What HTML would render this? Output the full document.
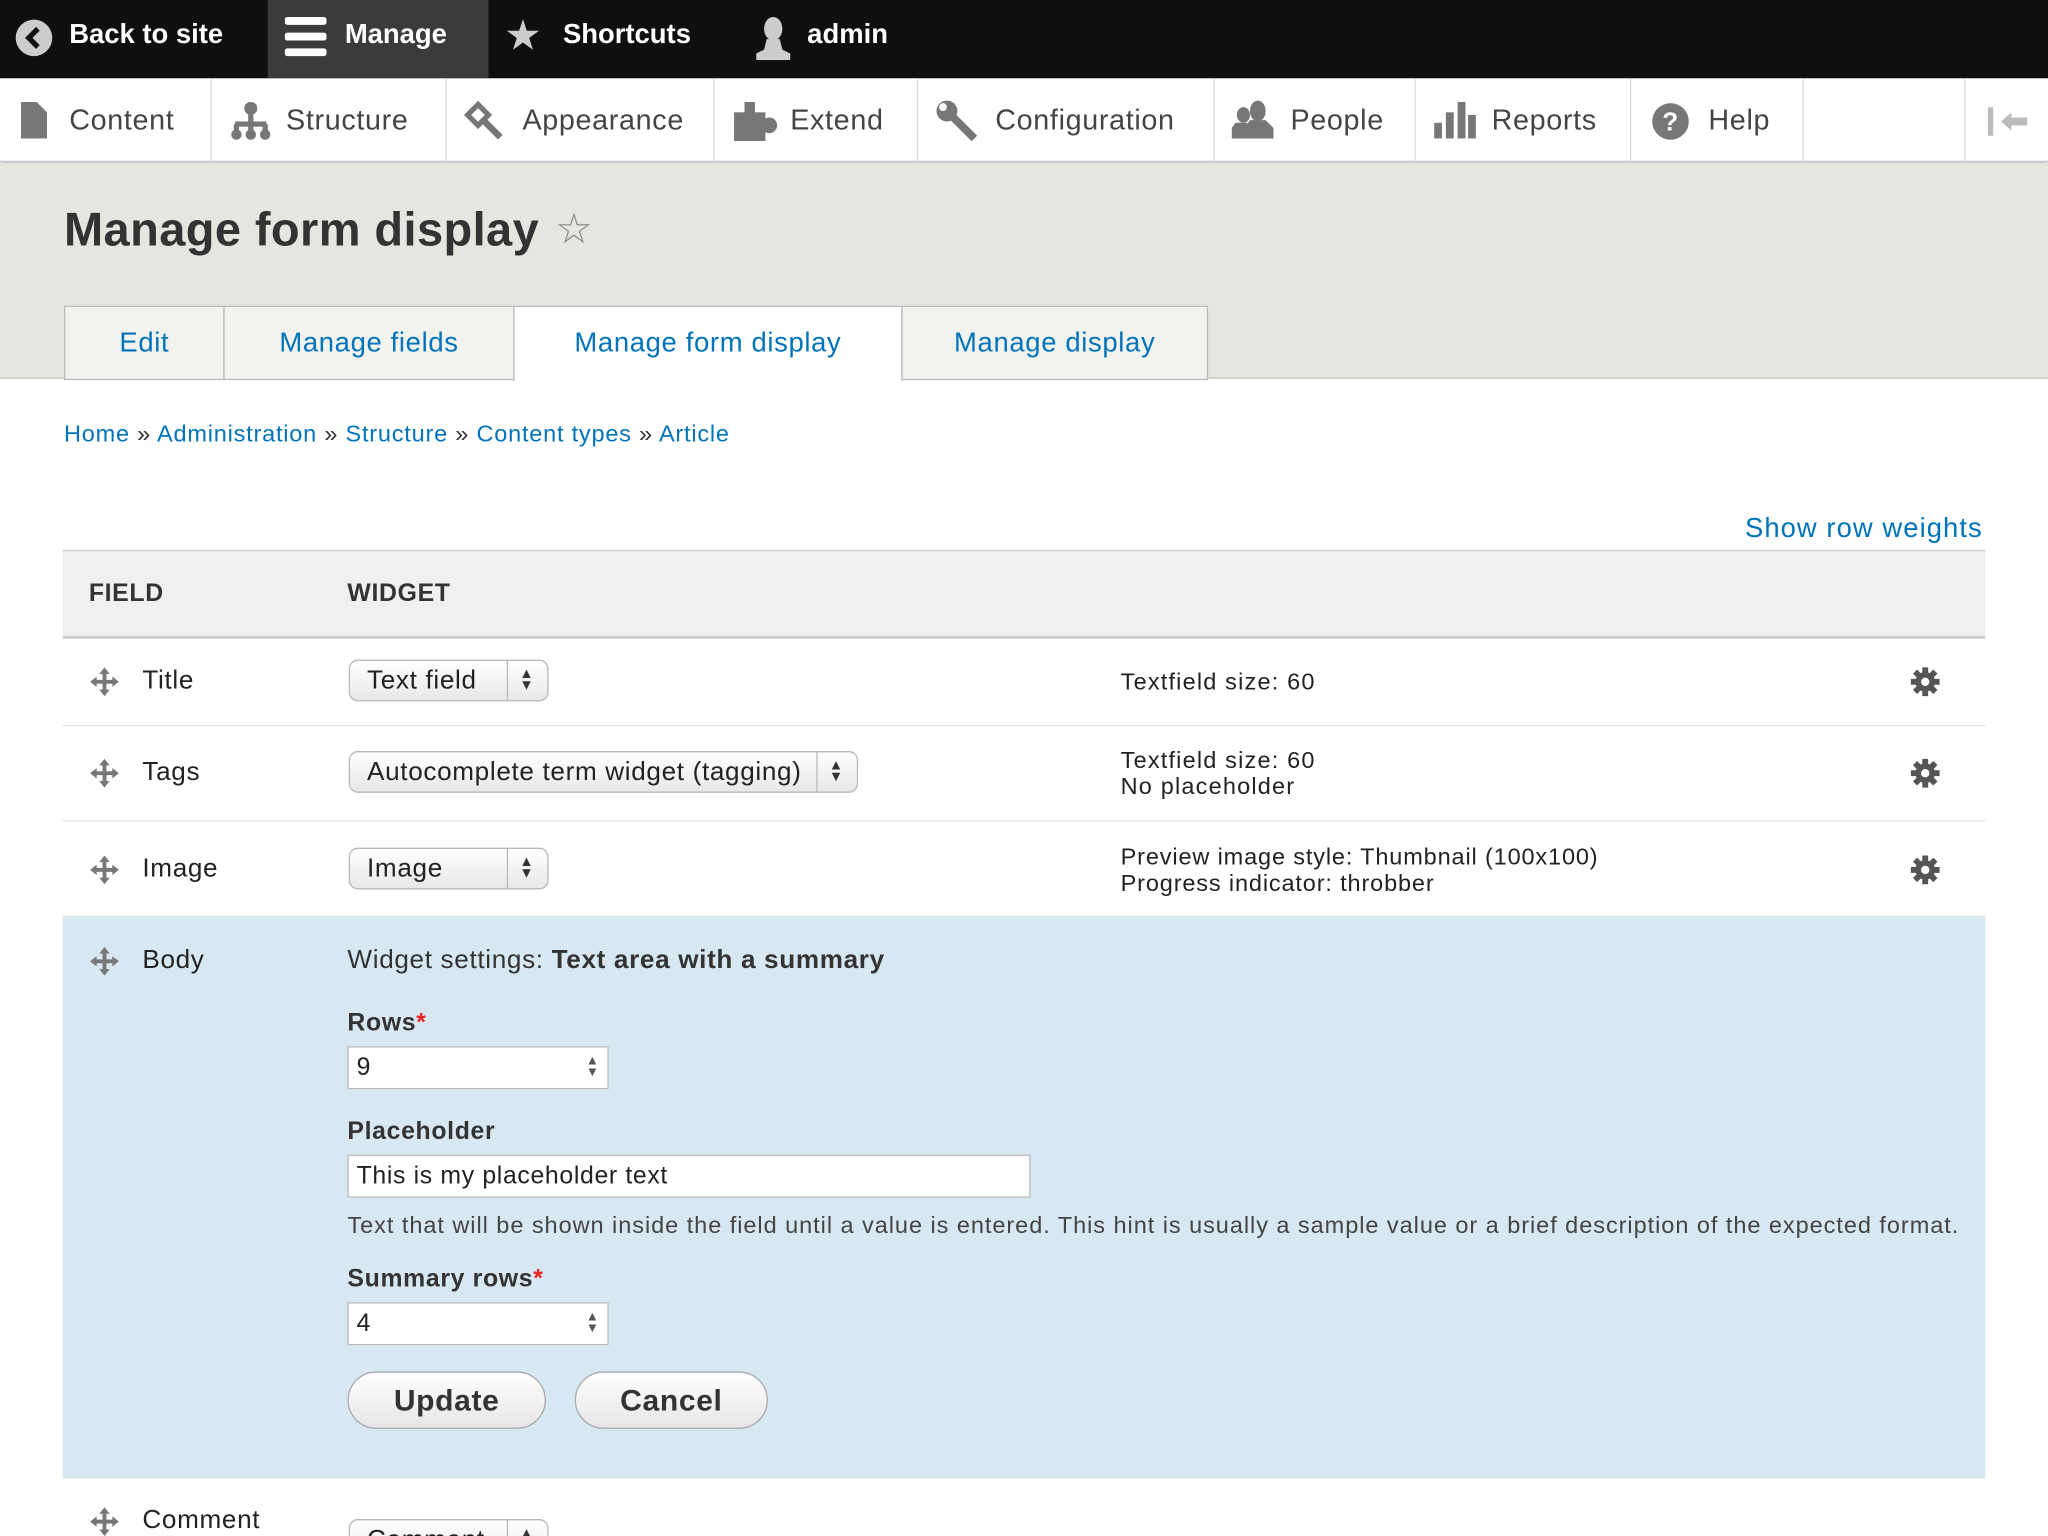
<!DOCTYPE html>
<html><head><meta charset="utf-8"><style>
*{box-sizing:border-box;margin:0;padding:0}
html,body{width:2048px;height:1536px;overflow:hidden;background:#fff}
#w{position:absolute;left:0;top:0;width:1568px;height:1176px;transform:scale(1.306122);transform-origin:0 0;font-family:"Liberation Sans",sans-serif;color:#222;overflow:hidden;letter-spacing:.5px}
.a{position:absolute;white-space:nowrap}
.top{left:0;top:0;width:1568px;height:60px;background:#0f0f0f}
.tt{color:#fff;font-weight:bold;font-size:21px;top:15px;letter-spacing:0}
.nav{left:0;top:60px;width:1568px;height:64px;background:#fff;border-bottom:1px solid #ccc;box-shadow:0 2px 3px rgba(0,0,0,.25)}
.ni{top:79px;font-size:22px;color:#444}
.sep{top:60px;width:1px;height:64px;background:#ddd}
.hdr{left:0;top:125px;width:1568px;height:165px;background:#e6e6e0;border-bottom:1px solid #c8c8c2}
.tab{top:234px;height:57px;border:1px solid #bbb;background:#f2f2ee;color:#0073ba;font-size:21px;text-align:center;line-height:56px}
.lnk{color:#0073ba}
.row{left:48px;width:1472px;border-bottom:1px solid #e2e2e2}
.sel{height:32px;border:1px solid #b8b8b8;border-radius:7px;background:linear-gradient(#fff,#e8e8e8);font-size:20px;line-height:30px;padding-left:13px;color:#222}
.sel:after{content:"";position:absolute;right:30px;top:0;width:1px;height:30px;background:#bbb}
.arr{position:absolute;right:10px;top:0;font-size:11px;line-height:9px;padding-top:6px;color:#333}
.mv{position:absolute}
.gear{position:absolute}
.inp{height:33px;border:1px solid #bbb;background:#fff;font-size:19px;line-height:31px;padding-left:6px}
.btn{height:44px;border:1px solid #aaa;border-radius:22px;background:linear-gradient(#fff,#e6e6e6);font-size:23px;font-weight:bold;text-align:center;line-height:42px;color:#333}
.lbl{font-size:19px;font-weight:bold;color:#333}
.req{color:#e22}
</style></head><body><div id="w">
<svg width="0" height="0" style="position:absolute"><defs>
<g id="mv"><path d="M12 1 L16 6 H13.5 V10.5 H18 V8 L23 12 L18 16 V13.5 H13.5 V18 H16 L12 23 L8 18 H10.5 V13.5 H6 V16 L1 12 L6 8 V10.5 H10.5 V6 H8Z" fill="#777"/></g>
<g id="gear"><circle cx="12" cy="12" r="7.5" fill="#555"/><g stroke="#555" stroke-width="4.5"><path d="M12 1V23M1 12H23M4.2 4.2L19.8 19.8M19.8 4.2L4.2 19.8"/></g><circle cx="12" cy="12" r="3.2" fill="#fff"/></g>
</defs></svg>
<div class="a top"></div>
<div class="a" style="left:205px;top:0;width:169px;height:60px;background:#3b3b3b"></div>
<svg class="a" style="left:11px;top:14px" width="30" height="30"><circle cx="15" cy="15" r="14" fill="#ccc"/><path d="M18 8 L11 15 L18 22" stroke="#111" stroke-width="4" fill="none"/></svg>
<div class="a tt" style="left:53px">Back to site</div>
<svg class="a" style="left:218px;top:12px" width="32" height="34"><rect x="0" y="1" width="32" height="6" rx="2" fill="#fff"/><rect x="0" y="13" width="32" height="6" rx="2" fill="#fff"/><rect x="0" y="25" width="32" height="6" rx="2" fill="#fff"/></svg>
<div class="a tt" style="left:264px">Manage</div>
<div class="a" style="left:386px;top:8px;font-size:32px;color:#ccc">★</div>
<div class="a tt" style="left:431px">Shortcuts</div>
<svg class="a" style="left:577px;top:12px" width="30" height="34"><ellipse cx="15" cy="10" rx="7" ry="9" fill="#ccc"/><path d="M10 18 L20 18 L22 26 L28 29 L28 34 L2 34 L2 29 L8 26Z" fill="#ccc"/></svg>
<div class="a tt" style="left:618px">admin</div>

<div class="a nav"></div>
<div class="a sep" style="left:161px"></div><div class="a sep" style="left:341px"></div><div class="a sep" style="left:546px"></div><div class="a sep" style="left:702px"></div><div class="a sep" style="left:929px"></div><div class="a sep" style="left:1083px"></div><div class="a sep" style="left:1248px"></div><div class="a sep" style="left:1380px"></div><div class="a sep" style="left:1504px"></div>
<svg class="a" style="left:16px;top:78px" width="20" height="28"><path d="M0 0 H12 L20 8 V28 H0Z" fill="#777"/></svg>
<div class="a ni" style="left:53px">Content</div>
<svg class="a" style="left:176px;top:78px" width="32" height="30" fill="#777"><circle cx="16" cy="5" r="5"/><rect x="14" y="8" width="4" height="10"/><rect x="4" y="15" width="24" height="4"/><rect x="3" y="17" width="4" height="6"/><rect x="25" y="17" width="4" height="6"/><circle cx="5" cy="25" r="4"/><circle cx="16" cy="25" r="4"/><circle cx="27" cy="25" r="4"/><rect x="14" y="17" width="4" height="6"/></svg>
<div class="a ni" style="left:219px">Structure</div>
<svg class="a" style="left:354px;top:76px" width="32" height="32"><path d="M4 12 L12 4 L20 12 L12 20Z" fill="none" stroke="#777" stroke-width="4"/><path d="M17 17 L29 29" stroke="#777" stroke-width="5"/></svg>
<div class="a ni" style="left:400px">Appearance</div>
<svg class="a" style="left:562px;top:78px" width="34" height="30" fill="#777"><rect x="0" y="8" width="24" height="22"/><rect x="8" y="0" width="8" height="10"/><circle cx="27" cy="18" r="6"/></svg>
<div class="a ni" style="left:605px">Extend</div>
<svg class="a" style="left:716px;top:76px" width="34" height="32"><circle cx="9" cy="9" r="8" fill="#777"/><path d="M8 8 L30 30" stroke="#777" stroke-width="6"/><circle cx="6" cy="6" r="3" fill="#fff"/></svg>
<div class="a ni" style="left:762px">Configuration</div>
<svg class="a" style="left:943px;top:76px" width="34" height="32" fill="#777"><ellipse cx="20" cy="9" rx="6" ry="8"/><path d="M14 16 H26 L32 22 V30 H10 V22Z"/><ellipse cx="9" cy="12" rx="5" ry="6"/><path d="M3 18 H12 V30 H0 V22Z"/></svg>
<div class="a ni" style="left:988px">People</div>
<svg class="a" style="left:1098px;top:78px" width="32" height="28" fill="#777"><rect x="0" y="16" width="6" height="12"/><rect x="9" y="8" width="6" height="20"/><rect x="18" y="0" width="6" height="28"/><rect x="26" y="10" width="6" height="18"/></svg>
<div class="a ni" style="left:1142px">Reports</div>
<svg class="a" style="left:1264px;top:78px" width="30" height="30"><circle cx="15" cy="15" r="14" fill="#777"/><text x="15" y="22" text-anchor="middle" font-family="Liberation Sans" font-weight="bold" font-size="20" fill="#fff">?</text></svg>
<div class="a ni" style="left:1308px">Help</div>
<svg class="a" style="left:1520px;top:82px" width="36" height="22"><rect x="2" y="0" width="4" height="22" fill="#bbb"/><path d="M12 11 L20 4 V8 H32 V14 H20 V18Z" fill="#bbb"/></svg>

<div class="a hdr"></div>
<div class="a" style="left:49px;top:155px;font-size:36px;font-weight:bold;color:#333;letter-spacing:.3px">Manage form display</div>
<div class="a" style="left:425px;top:156px;font-size:32px;color:#888">☆</div>
<div class="a tab" style="left:49px;width:123px">Edit</div>
<div class="a tab" style="left:171px;width:223px">Manage fields</div>
<div class="a tab" style="left:393px;width:298px;background:#fff;border-bottom-color:#fff;height:58px">Manage form display</div>
<div class="a tab" style="left:690px;width:235px">Manage display</div>

<div class="a" style="left:49px;top:322px;font-size:18px;color:#333;letter-spacing:.6px"><span class="lnk">Home</span> » <span class="lnk">Administration</span> » <span class="lnk">Structure</span> » <span class="lnk">Content types</span> » <span class="lnk">Article</span></div>
<div class="a lnk" style="left:1336px;top:393px;font-size:21px;letter-spacing:.8px">Show row weights</div>

<div class="a" style="left:48px;top:421px;width:1472px;height:68px;background:#f0f0ee;border-top:1px solid #ccc;border-bottom:2px solid #ccc"></div>
<div class="a" style="left:68px;top:444px;font-size:19px;font-weight:bold;color:#333">FIELD</div>
<div class="a" style="left:266px;top:444px;font-size:19px;font-weight:bold;color:#333">WIDGET</div>

<div class="a row" style="top:489px;height:67px"></div>
<svg class="mv" style="left:68px;top:510px" width="24" height="24"><use href="#mv"/></svg>
<div class="a" style="left:109px;top:510px;font-size:20px">Title</div>
<div class="a sel" style="left:267px;top:505px;width:153px">Text field<span class="arr">▲<br>▼</span></div>
<div class="a" style="left:858px;top:512px;font-size:18px;letter-spacing:.9px">Textfield size: 60</div>
<svg class="gear" style="left:1462px;top:510px" width="24" height="24"><use href="#gear"/></svg>

<div class="a row" style="top:556px;height:73px"></div>
<svg class="mv" style="left:68px;top:580px" width="24" height="24"><use href="#mv"/></svg>
<div class="a" style="left:109px;top:580px;font-size:20px">Tags</div>
<div class="a sel" style="left:267px;top:575px;width:390px">Autocomplete term widget (tagging)<span class="arr">▲<br>▼</span></div>
<div class="a" style="left:858px;top:572px;font-size:18px;line-height:20px;letter-spacing:.9px">Textfield size: 60<br>No placeholder</div>
<svg class="gear" style="left:1462px;top:580px" width="24" height="24"><use href="#gear"/></svg>

<div class="a row" style="top:629px;height:73px"></div>
<svg class="mv" style="left:68px;top:654px" width="24" height="24"><use href="#mv"/></svg>
<div class="a" style="left:109px;top:654px;font-size:20px">Image</div>
<div class="a sel" style="left:267px;top:649px;width:153px">Image<span class="arr">▲<br>▼</span></div>
<div class="a" style="left:858px;top:646px;font-size:18px;line-height:20px;letter-spacing:.65px">Preview image style: Thumbnail (100x100)<br>Progress indicator: throbber</div>
<svg class="gear" style="left:1462px;top:654px" width="24" height="24"><use href="#gear"/></svg>

<div class="a" style="left:48px;top:702px;width:1472px;height:430px;background:#d7e8f2"></div>
<svg class="mv" style="left:68px;top:724px" width="24" height="24"><use href="#mv"/></svg>
<div class="a" style="left:109px;top:724px;font-size:20px">Body</div>
<div class="a" style="left:266px;top:724px;font-size:20px;color:#333">Widget settings: <b>Text area with a summary</b></div>
<div class="a lbl" style="left:266px;top:773px">Rows<span class="req">*</span></div>
<div class="a inp" style="left:266px;top:801px;width:200px">9<span style="position:absolute;right:6px;top:0;font-size:10px;line-height:9px;padding-top:6px;color:#555">▲<br>▼</span></div>
<div class="a lbl" style="left:266px;top:856px">Placeholder</div>
<div class="a inp" style="left:266px;top:884px;width:523px">This is my placeholder text</div>
<div class="a" style="left:266px;top:928px;font-size:18px;color:#444;letter-spacing:.73px">Text that will be shown inside the field until a value is entered. This hint is usually a sample value or a brief description of the expected format.</div>
<div class="a lbl" style="left:266px;top:969px">Summary rows<span class="req">*</span></div>
<div class="a inp" style="left:266px;top:997px;width:200px">4<span style="position:absolute;right:6px;top:0;font-size:10px;line-height:9px;padding-top:6px;color:#555">▲<br>▼</span></div>
<div class="a btn" style="left:266px;top:1050px;width:152px">Update</div>
<div class="a btn" style="left:440px;top:1050px;width:148px">Cancel</div>

<svg class="mv" style="left:68px;top:1153px" width="24" height="24"><use href="#mv"/></svg>
<div class="a" style="left:109px;top:1153px;font-size:20px">Comment</div>
<div class="a sel" style="left:267px;top:1163px;width:153px">Comment<span class="arr">▲<br>▼</span></div>
</div></body></html>
